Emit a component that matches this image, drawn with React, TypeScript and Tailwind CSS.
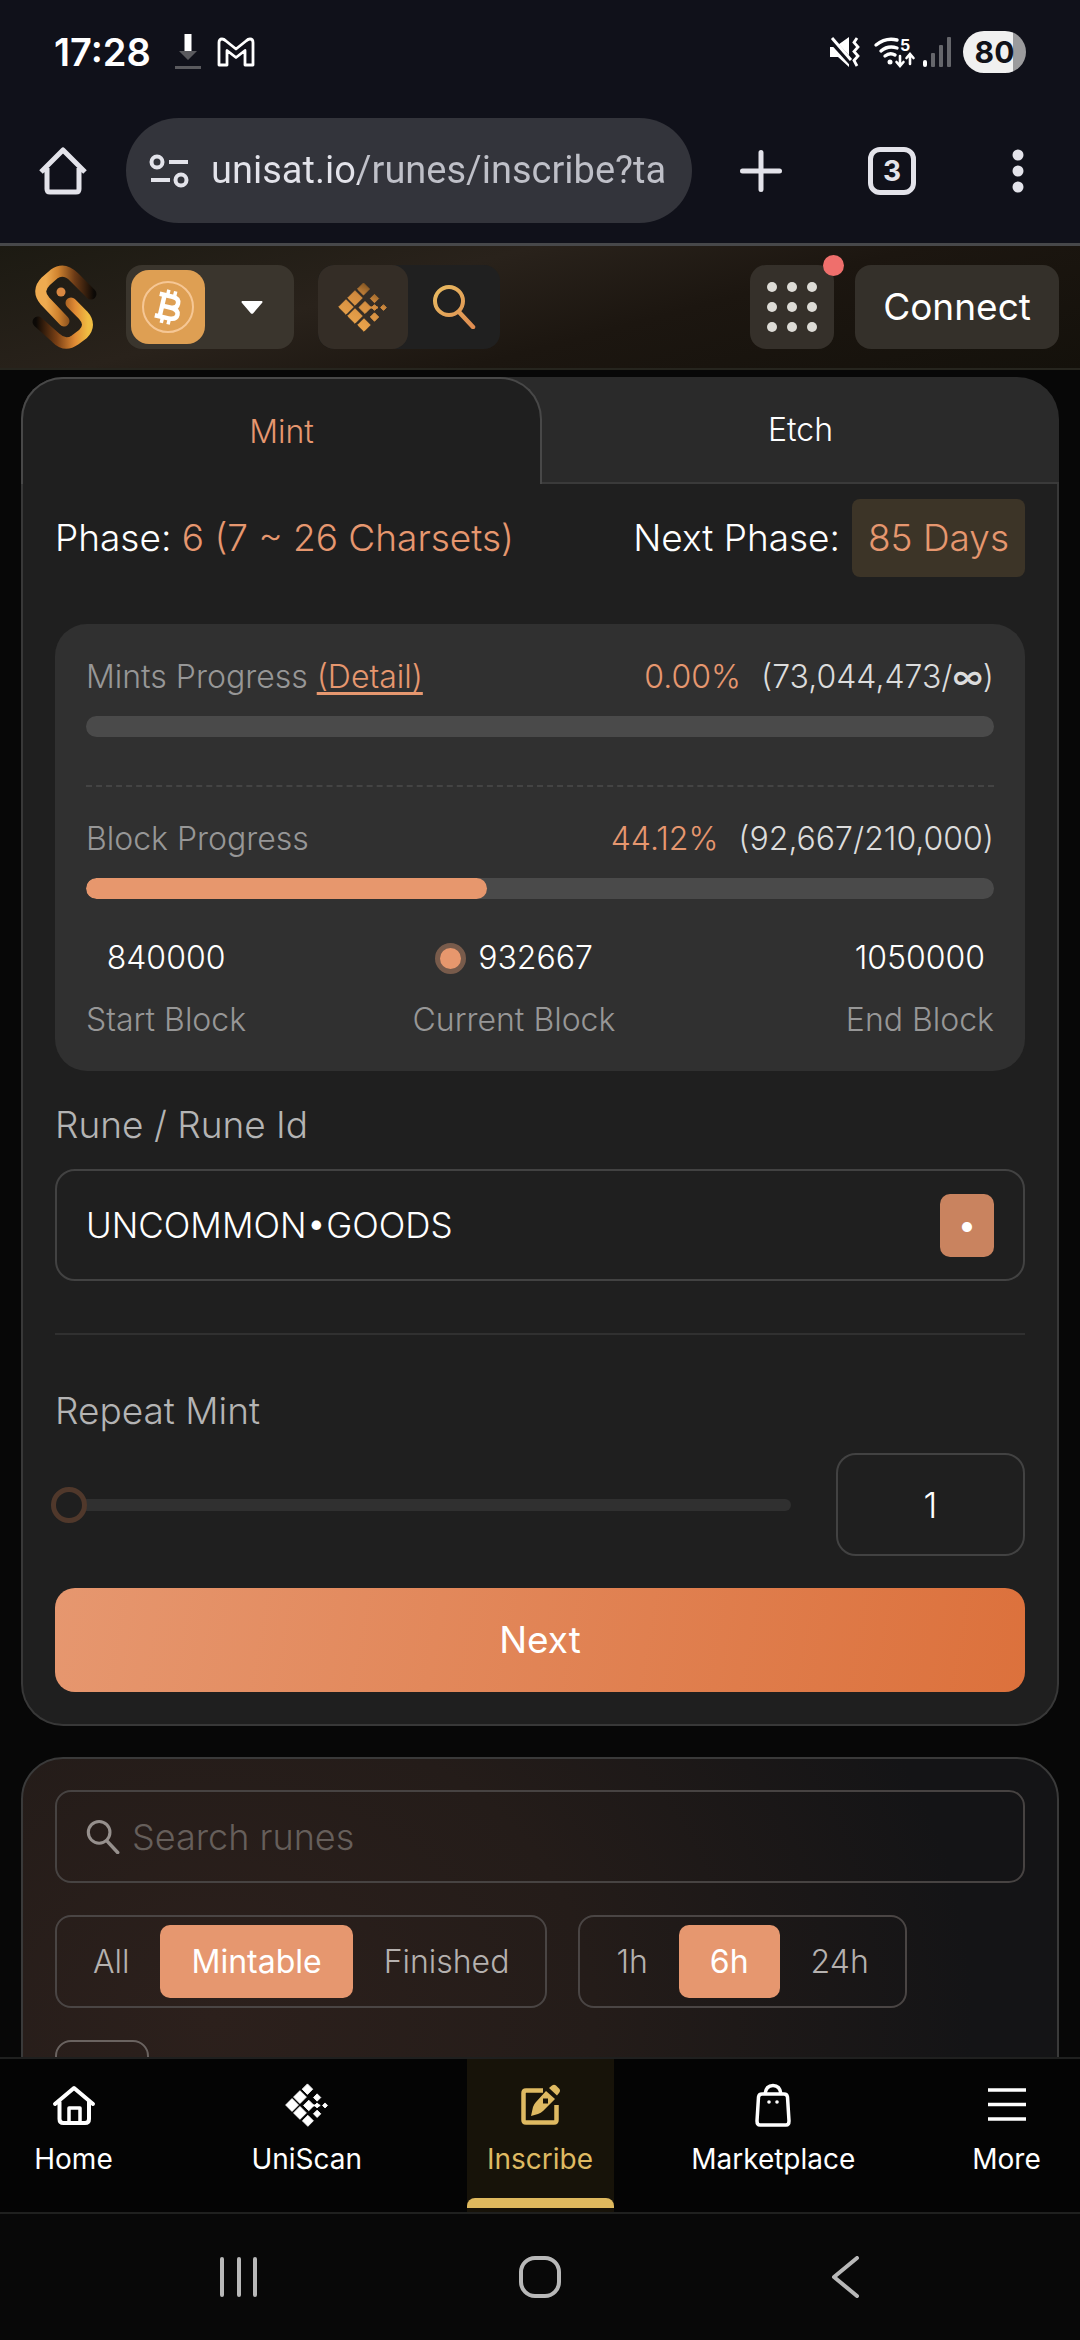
import { useState } from "react";
import type { ReactNode } from "react";

interface IScanIconProps {
  size: string
  fill: string
}

interface IProgressProps {
  label: ReactNode
  percent: number
  percentText: string
  amount: ReactNode
}

interface ISegmentedProps {
  label: string
  options: string[]
  value: string
  onChange: (value: string) => void
}

interface INavItemProps {
  label: string
  icon: ReactNode
  active?: boolean
}

// x, y and half side of each tile
const TILES = [
  [33.5, 16, 4.6],
  [25, 25, 5.6],
  [16, 34, 5.6],
  [25, 43, 5.6],
  [34, 52, 4.8],
  [35, 34.5, 4.6],
  [44.5, 25.5, 3.2],
  [44.5, 34.5, 2.2],
  [53.5, 34.5, 2.2],
  [44.5, 44, 3.2],
];

function ScanIcon({ size, fill }: IScanIconProps) {
  return (
    <svg viewBox="8 9 50 50" className={size} fill={fill} aria-hidden="true">
      <defs>
        <linearGradient id="scanGold" gradientUnits="userSpaceOnUse" x1="44" y1="10" x2="20" y2="56">
          <stop offset="0" stopColor="#6b4519" />
          <stop offset="0.35" stopColor="#d08a3e" />
          <stop offset="1" stopColor="#efa84d" />
        </linearGradient>
      </defs>
      {TILES.map(([x, y, r]) => (
        <path
          key={`${x}-${y}`}
          d={`M${x} ${y - r * 1.3}L${x + r * 1.3} ${y}L${x} ${y + r * 1.3}L${x - r * 1.3} ${y}Z`}
          stroke={fill}
          strokeWidth="1"
          strokeLinejoin="round"
        />
      ))}
      <rect x="38" y="33.5" width="10" height="2" />
    </svg>
  )
}

function SearchIcon({ size, stroke }: { size: string, stroke: string }) {
  return (
    <svg viewBox="0 0 44 44" className={size} fill="none" stroke={stroke} strokeLinecap="round" aria-hidden="true">
      <defs>
        <linearGradient id="searchGold" gradientUnits="userSpaceOnUse" x1="0" y1="0" x2="44" y2="44">
          <stop offset="0" stopColor="#e8bd62" />
          <stop offset="1" stopColor="#df8a50" />
        </linearGradient>
      </defs>
      <circle cx="17" cy="16" r="14" strokeWidth="4" />
      <path d="M27 27L41 42" strokeWidth="4.5" />
    </svg>
  )
}

function Logo() {
  return (
    <svg viewBox="11 12 66 86" className="h-[86px] w-[66px]" fill="none" strokeWidth="11" strokeLinecap="round" aria-hidden="true">
      <defs>
        <linearGradient id="logoTop" gradientUnits="userSpaceOnUse" x1="74" y1="40" x2="26" y2="40">
          <stop offset="0" stopColor="#0c0906" />
          <stop offset="0.4" stopColor="#6b3a16" />
          <stop offset="0.75" stopColor="#d0832f" />
          <stop offset="1" stopColor="#efab50" />
        </linearGradient>
        <linearGradient id="logoBottom" gradientUnits="userSpaceOnUse" x1="16" y1="68" x2="68" y2="68">
          <stop offset="0" stopColor="#0c0906" />
          <stop offset="0.4" stopColor="#7a4015" />
          <stop offset="0.75" stopColor="#e08a34" />
          <stop offset="1" stopColor="#f0bd42" />
        </linearGradient>
      </defs>
      <path d="M71 42L54 25Q44 15 34 22L26 29Q16 39 25 49L44 69" stroke="url(#logoTop)" />
      <path d="M51 51L63 63Q72 73 63 82L55 88Q45 95 36 86L18 70" stroke="url(#logoBottom)" />
      <circle cx="41" cy="40" r="4.5" fill="#d98842" />
    </svg>
  )
}

function StatusBar() {
  return (
    <div className="flex h-[104px] items-center justify-between px-[54px]">
      <div className="flex items-center gap-4">
        <span className="mr-2 text-[38px] font-semibold leading-none">17:28</span>
        <svg viewBox="0 0 26 36" className="h-9 w-[26px]" aria-hidden="true">
          <path d="M9.500 0H16.500V17H9.500Z" fill="#fff" />
          <path d="M4 17H22L13 26ZM0 32H26V35H0Z" fill="#5a5a5e" />
        </svg>
        <svg viewBox="0 0 38 30" className="h-[30px] w-[38px]" fill="none" stroke="#fff" strokeWidth="2.800" strokeLinejoin="round" aria-hidden="true">
          <path d="M2 5.500Q2 2 5 2Q7 2 9 4L19 12L29 4Q31 2 33 2Q36 2 36 5.500V28H28V13.500L19 20.500L10 13.500V28H2Z" />
        </svg>
      </div>
      <div className="flex items-center">
        <svg viewBox="0 0 32 32" className="size-8" fill="none" stroke="#fff" aria-hidden="true">
          <path d="M1 11H6L20 1V31L9 21H1Z" fill="#fff" stroke="none" />
          <path d="M1 3L22 26" stroke="#10111a" strokeWidth="6" />
          <path d="M3 2L22 24" strokeWidth="3" />
          <path d="M28 2L25 6.500L29 11L25 15.500L29 20L25 24.500L28 30" strokeWidth="2.800" />
        </svg>
        <svg viewBox="0 0 42 32" className="ml-3 h-8 w-[42px] overflow-visible" fill="none" stroke="#fff" strokeWidth="3.400" strokeLinecap="round" aria-hidden="true">
          <path d="M3 9Q13 1 24 4M8 15Q15 9 24 12M12 20Q17 16 22 19" />
          <circle cx="17" cy="26" r="2.500" fill="#fff" stroke="none" />
          <path d="M27 20V29M23.500 26L27 30L30.500 26M37 28V19M33.500 22L37 18L40.500 22" strokeWidth="2.600" />
          <text x="27" y="15" fill="#fff" stroke="none" className="text-[16px] font-bold">5</text>
        </svg>
        <svg viewBox="0 0 30 30" className="ml-2 size-[30px]" fill="#65666b" aria-hidden="true">
          <rect x="0" y="23" width="4" height="7" rx="2" fill="#fff" />
          <rect x="8" y="16" width="4" height="14" rx="1" />
          <rect x="16" y="8" width="4" height="22" rx="1" />
          <rect x="24" y="0" width="4" height="30" rx="1" />
        </svg>
        <span className="ml-2.5 flex h-[42px] w-[63px] items-center justify-center rounded-full bg-[linear-gradient(to_right,#f0f0f0_80%,#9b9b9d_80%)] text-[30px] font-bold text-[#111219]">80</span>
      </div>
    </div>
  )
}

function BrowserBar() {
  return (
    <div className="flex h-[142px] items-center border-b-[3px] border-[#47484a] pb-1.5 pl-[39px] pr-14">
      <button aria-label="Home page">
        <svg viewBox="0 0 48 48" className="size-12" fill="none" stroke="#e3e3ea" strokeWidth="5" strokeLinejoin="round" aria-hidden="true">
          <path d="M2 25L24 3L46 25M8 21V42Q8 45 11 45H37Q40 45 40 42V21" />
        </svg>
      </button>
      <div className="ml-[39px] flex h-[105px] min-w-0 flex-1 items-center gap-[22px] rounded-full bg-[#33343b] pl-[23px] pr-4">
        <svg viewBox="0 0 40 34" className="h-[34px] w-10 shrink-0" fill="none" stroke="#e3e3ea" strokeWidth="4" aria-hidden="true">
          <circle cx="8" cy="8" r="5.500" />
          <path d="M20 8H39M2 26H21" />
          <circle cx="32" cy="26" r="5.500" />
        </svg>
        <input
          aria-label="Address"
          defaultValue="unisat.io/runes/inscribe?ta"
          className="min-w-0 flex-1 bg-[linear-gradient(to_right,#e3e3ea_148px,#bfc0c8_148px)] bg-clip-text font-[Roboto,sans-serif] text-[38px] text-transparent outline-none"
        />
      </div>
      <button aria-label="New tab" className="ml-12">
        <svg viewBox="0 0 42 42" className="size-[42px]" stroke="#e3e3ea" strokeWidth="5" strokeLinecap="round" aria-hidden="true">
          <path d="M21 2.500V39.500M2.500 21H39.500" />
        </svg>
      </button>
      <button aria-label="Switch tabs" className="ml-[86px] flex size-12 items-center justify-center rounded-xl border-[5px] border-[#e3e3ea] text-[28px] font-bold leading-none text-[#e3e3ea]">3</button>
      <button aria-label="Menu" className="ml-24">
        <svg viewBox="0 0 12 44" className="h-11 w-3" fill="#e3e3ea" aria-hidden="true">
          <circle cx="6" cy="6" r="5.500" />
          <circle cx="6" cy="22" r="5.500" />
          <circle cx="6" cy="38" r="5.500" />
        </svg>
      </button>
    </div>
  )
}

function SiteHeader() {
  return (
    <header className="flex h-[124px] shrink-0 items-center border-b-2 border-[#26251e] bg-[linear-gradient(165deg,#1c1a12,#29221b_35%,#1c1610_60%,#14110b)] pl-[31px] pr-[21px]">
      <a href="#" aria-label="UniSat">
        <Logo />
      </a>
      <button aria-label="Network" className="ml-[29px] flex h-[84px] w-[168px] items-center rounded-2xl bg-[#3a352d] pl-[5px] pr-[31px]">
        <span className="flex size-[74px] items-center justify-center rounded-[18px] bg-[#de9f53]">
          <svg viewBox="0 0 54 54" className="size-[54px]" fill="none" aria-hidden="true">
            <circle cx="27" cy="27" r="25" stroke="#f6c795" strokeWidth="2" />
            <g transform="rotate(13 27 27)" stroke="#fff" strokeWidth="4.500">
              <path d="M16 16H29Q36 16 36 21.500Q36 27 29 27H21M29 27Q38 27 38 32.500Q38 38 30 38H16M21 16V38" />
              <path d="M24 10V16M31 10V16M24 38V44M31 38V44" strokeWidth="3.500" />
            </g>
          </svg>
        </span>
        <svg viewBox="0 0 22 13" className="ml-auto h-[13px] w-[22px]" fill="#fff" aria-hidden="true">
          <path d="M1 0H21Q22 1 21 2L12 12.500Q11 13 10 12.500L1 2Q0 1 1 0Z" />
        </svg>
      </button>
      <div className="ml-6 flex h-[84px] w-[182px] overflow-hidden rounded-2xl bg-[#202020]">
        <button aria-label="UniScan" className="flex w-[90px] items-center justify-center rounded-2xl bg-[#342d26]">
          <ScanIcon size="size-[50px]" fill="url(#scanGold)" />
        </button>
        <button aria-label="Search" className="flex flex-1 items-center justify-center">
          <SearchIcon size="size-[44px]" stroke="url(#searchGold)" />
        </button>
      </div>
      <button aria-label="Apps" className="relative ml-auto flex size-[84px] items-center justify-center rounded-2xl bg-[#35302a]">
        <span className="grid grid-cols-3 gap-2.5">
          {Array.from({ length: 9 }, (_, i) => (
            <span key={i} className="size-[10px] rounded-full bg-[#dddbd6]"></span>
          ))}
        </span>
        <span className="absolute -right-2.5 -top-2.5 size-[21px] rounded-full bg-[#ef6f6c]"></span>
      </button>
      <button className="ml-[21px] flex h-[84px] w-[204px] items-center justify-center rounded-2xl bg-[#34302a] text-[37px]">Connect</button>
    </header>
  )
}

function Progress({ label, percent, percentText, amount }: IProgressProps) {
  return (
    <div className="flex flex-col gap-[18px]">
      <div className="flex justify-between">
        <span className="text-[#979797]">{label}</span>
        <span className="flex gap-5">
          <span className="text-[#e6976f]">{percentText}</span>
          <span className="text-[#dcdcdc]">{amount}</span>
        </span>
      </div>
      <div className="h-[21px] overflow-hidden rounded-full bg-[#4a4a4a]">
        <div className="h-full rounded-full bg-[#e7976d]" style={{ width: `${percent}%` }}></div>
      </div>
    </div>
  )
}

function MintCard() {
  const [rune, setRune] = useState("UNCOMMON•GOODS")
  const [repeat, setRepeat] = useState("1")

  return (
    <section>
      <div role="tablist" className="flex h-[107px] rounded-t-[42px] bg-[#2a2a2a] text-[32px]">
        <button role="tab" aria-selected="true" className="flex-1 rounded-t-[42px] border-2 border-b-0 border-[#484848] bg-[#1f1f1f] font-light text-[#e6976f]">Mint</button>
        <button role="tab" aria-selected="false" className="flex-1 border-b-2 border-[#3a3a3a] font-light">Etch</button>
      </div>
      <div className="rounded-b-[42px] border-2 border-t-0 border-[#383838] bg-[#1f1f1f] px-8 pb-8 pt-[15px] font-light">
        <div className="flex items-center justify-between text-[37px]">
          <p>Phase: <span className="text-[#e6976f]">6 (7 ~ 26 Charsets)</span></p>
          <p className="flex items-center gap-3">
            Next Phase:
            <span className="flex h-[78px] items-center rounded-lg bg-[#3c3427] px-4 text-[#e6976f]">85 Days</span>
          </p>
        </div>

        <div className="mt-[47px] rounded-[32px] bg-[#303030] px-[31px] pb-[30px] pt-8 text-[32px] leading-[42px]">
          <Progress
            label={<>Mints Progress <a href="#" className="text-[#e6976f] underline underline-offset-4">(Detail)</a></>}
            percent={0}
            percentText="0.00%"
            amount={<>(73,044,473/<span className="font-medium">∞</span>)</>}
          />
          <hr className="mb-[31px] mt-12 border-t-2 border-dashed border-[#444]" />
          <Progress label="Block Progress" percent={44.12} percentText="44.12%" amount="(92,667/210,000)" />
          <div className="mt-[38px] flex justify-between text-center">
            <div className="flex flex-col gap-5">
              <span>840000</span>
              <span className="text-[#979797]">Start Block</span>
            </div>
            <div className="mr-16 flex flex-col gap-5">
              <span className="flex items-center justify-center gap-3">
                <span className="size-[31px] rounded-full border-[5px] border-[#785b4b] bg-[#e7976d]"></span>
                932667
              </span>
              <span className="text-[#979797]">Current Block</span>
            </div>
            <div className="flex flex-col gap-5">
              <span>1050000</span>
              <span className="text-[#979797]">End Block</span>
            </div>
          </div>
        </div>

        <label htmlFor="rune" className="mt-[30px] block text-[37px] leading-[48px] text-[#b4b4b4]">Rune / Rune Id</label>
        <div className="mt-5 flex h-28 items-center rounded-[20px] border-2 border-[#424242] px-[29px]">
          <input
            id="rune"
            value={rune}
            onChange={(e) => setRune(e.target.value)}
            className="min-w-0 flex-1 bg-transparent text-[35px] font-light outline-none"
          />
          <button
            aria-label="Insert bullet"
            onClick={() => setRune(rune + "•")}
            className="flex h-[63px] w-[54px] items-center justify-center rounded-[10px] bg-[#c9835f] text-[32px] font-normal"
          >•</button>
        </div>

        <hr className="mt-[52px] border-t-2 border-[#303030]" />

        <label htmlFor="repeat" className="mt-[52px] block text-[37px] leading-[48px] text-[#b4b4b4]">Repeat Mint</label>
        <div className="mt-[18px] flex items-center gap-[45px]">
          <input
            type="range"
            aria-label="Repeat mint amount"
            min="1"
            max="100"
            value={repeat}
            onChange={(e) => setRepeat(e.target.value)}
            className="-ml-1 h-3 min-w-0 flex-1 appearance-none rounded-full bg-[#303030] [&::-webkit-slider-thumb]:size-9 [&::-webkit-slider-thumb]:appearance-none [&::-webkit-slider-thumb]:rounded-full [&::-webkit-slider-thumb]:border-[5px] [&::-webkit-slider-thumb]:border-solid [&::-webkit-slider-thumb]:border-[#50382b] [&::-webkit-slider-thumb]:bg-[#1f1f1f]"
          />
          <input
            id="repeat"
            inputMode="numeric"
            value={repeat}
            onChange={(e) => setRepeat(e.target.value)}
            className="h-[103px] w-[189px] rounded-[20px] border-2 border-[#424242] bg-transparent text-center text-[35px] font-light outline-none"
          />
        </div>

        <button className="mt-8 h-[104px] w-full rounded-[20px] bg-[linear-gradient(100deg,#e6976f,#dc713c)] text-[37px] font-normal">Next</button>
      </div>
    </section>
  )
}

function Segmented({ label, options, value, onChange }: ISegmentedProps) {
  return (
    <div role="group" aria-label={label} className="flex h-[93px] items-center rounded-2xl border-2 border-[#4a4544] px-[5px]">
      {options.map((option) => (
        <button
          key={option}
          aria-pressed={option === value}
          onClick={() => onChange(option)}
          className={
            option === value
              ? "h-[73px] rounded-[10px] bg-[#e6976f] px-[31px] font-normal text-white"
              : "h-[73px] px-[31px] text-[#b5b1af]"
          }
        >{option}</button>
      ))}
    </div>
  )
}

function RuneList() {
  const [status, setStatus] = useState("Mintable")
  const [period, setPeriod] = useState("6h")

  return (
    <section className="mt-[31px] min-h-[600px] rounded-t-[42px] border-2 border-[#3a3a3a] bg-[radial-gradient(ellipse_760px_620px_at_190px_260px,#2c201c,#241c19_50%,#141416)] px-8 pt-[31px] font-light">
      <label className="flex h-[93px] items-center gap-3 rounded-2xl border-2 border-[#474342] px-[29px]">
        <SearchIcon size="size-[34px]" stroke="#96908d" />
        <input
          placeholder="Search runes"
          aria-label="Search runes"
          className="min-w-0 flex-1 bg-transparent text-[36px] outline-none placeholder:text-[#665f5b]"
        />
      </label>
      <div className="mt-8 flex flex-wrap gap-x-[31px] gap-y-8 text-[32px]">
        <Segmented label="Status" options={["All", "Mintable", "Finished"]} value={status} onChange={setStatus} />
        <Segmented label="Period" options={["1h", "6h", "24h"]} value={period} onChange={setPeriod} />
        <button aria-label="Refresh" className="mr-96 h-[93px] w-[94px] rounded-2xl border-2 border-[#6a6360]"></button>
      </div>
    </section>
  )
}

function NavItem({ label, icon, active }: INavItemProps) {
  return (
    <a
      href="#"
      aria-current={active ? "page" : undefined}
      className={
        active
          ? "relative flex w-[147px] flex-col items-center gap-3.5 bg-[#171309] pt-6 text-[#dfba62]"
          : "relative flex w-[147px] flex-col items-center gap-3.5 pt-6"
      }
    >
      {icon}
      <span className="text-[28px] leading-9">{label}</span>
      {active && <span className="absolute inset-x-0 bottom-1 h-2.5 rounded-t-lg bg-[#dfb95e]"></span>}
    </a>
  )
}

function BottomNav() {
  return (
    <nav className="flex h-[157px] shrink-0 justify-between border-y-2 border-[#1f201f] bg-[#040404]">
      <NavItem
        label="Home"
        icon={
          <svg viewBox="0 0 44 44" className="size-11" fill="none" stroke="#fff" strokeWidth="4" strokeLinecap="round" strokeLinejoin="round" aria-hidden="true">
            <path d="M3 21L22 5L41 21M7.500 19V36Q7.500 40 11.500 40H33Q37 40 37 36V19" />
            <path d="M17 39V25H28V39" strokeWidth="3.500" />
          </svg>
        }
      />
      <NavItem label="UniScan" icon={<ScanIcon size="size-11" fill="#fff" />} />
      <NavItem
        label="Inscribe"
        active
        icon={
          <svg viewBox="16 12 44 44" className="size-11" fill="#dfba62" aria-hidden="true">
            <path d="M41 19.500H24Q21.500 19.500 21.500 22V49Q21.500 51.500 24 51.500H52Q54.500 51.500 54.500 49V34" fill="none" stroke="#dfba62" strokeWidth="4.500" />
            <path d="M29 45L31 36Q32 33 34 31L44 20L53 28L41 40Q39 42 36 43Z" />
            <path d="M47 17L50 14.500Q52 13 54 14.500L57 17.500Q59 19.500 57 22L55 24.500Z" />
            <rect x="41" y="27.500" width="5" height="5" fill="#171309" />
          </svg>
        }
      />
      <NavItem
        label="Marketplace"
        icon={
          <svg viewBox="0 0 44 44" className="size-11" fill="none" stroke="#fff" strokeWidth="3.500" strokeLinejoin="round" aria-hidden="true">
            <path d="M11 11H33Q36 11 36.500 14L38 38Q38 42 35 42H9Q6 42 6 38L7.500 14Q8 11 11 11Z" />
            <path d="M14 11Q15 2.500 22 2.500Q29 2.500 30 11" />
            <circle cx="18" cy="19" r="1.800" fill="#fff" stroke="none" />
            <circle cx="26" cy="19" r="1.800" fill="#fff" stroke="none" />
          </svg>
        }
      />
      <NavItem
        label="More"
        icon={
          <svg viewBox="0 0 44 44" className="size-11" stroke="#fff" strokeWidth="3.500" aria-hidden="true">
            <path d="M3 7H41M3 21.500H41M3 36H41" />
          </svg>
        }
      />
    </nav>
  )
}

function SystemNav() {
  return (
    <div className="flex h-[126px] shrink-0 items-center justify-between bg-[#080808] px-[216px]">
      <button aria-label="Recents">
        <svg viewBox="0 0 42 42" className="size-[42px]" stroke="#b8b8b8" strokeWidth="4" strokeLinecap="round" aria-hidden="true">
          <path d="M6 3V39M23 3V39M39 3V39" />
        </svg>
      </button>
      <button aria-label="Home" className="size-[42px] rounded-2xl border-4 border-[#b8b8b8]"></button>
      <button aria-label="Back">
        <svg viewBox="0 0 42 42" className="size-[42px]" fill="none" stroke="#b8b8b8" strokeWidth="4" strokeLinecap="round" strokeLinejoin="round" aria-hidden="true">
          <path d="M35 2L12 21L35 40" />
        </svg>
      </button>
    </div>
  )
}

export default function App() {
  return (
    <div className="flex h-screen flex-col overflow-hidden bg-[#070707] font-[Inter,sans-serif] text-white">
      <div className="shrink-0 bg-[#10111a]">
        <StatusBar />
        <BrowserBar />
      </div>
      <SiteHeader />
      <main className="min-h-0 flex-1 overflow-hidden px-[21px] pt-[7px]">
        <MintCard />
        <RuneList />
      </main>
      <BottomNav />
      <SystemNav />
    </div>
  )
}
